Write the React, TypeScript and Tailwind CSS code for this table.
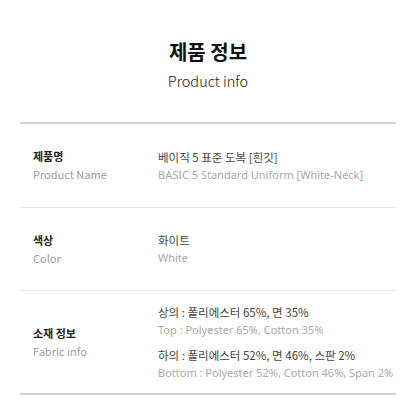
const KO = "font-['Noto_Sans_CJK_KR',sans-serif]";
const EN = "font-['Noto_Sans','Noto_Sans_CJK_KR',sans-serif]";

const ROWS = [
  {
    ko: '제품명',
    en: 'Product Name',
    h: 'h-[83px]',
    values: [{ ko: '베이직 5 표준 도복 [흰깃]', en: 'BASIC 5 Standard Uniform [White-Neck]' }],
  },
  {
    ko: '색상',
    en: 'Color',
    h: 'h-[83px]',
    values: [{ ko: '화이트', en: 'White' }],
  },
  {
    ko: '소재 정보',
    en: 'Fabric info',
    h: 'h-[103px]',
    values: [
      { ko: '상의 : 폴리에스터 65%, 면 35%', en: 'Top : Polyester 65%, Cotton 35%' },
      { ko: '하의 : 폴리에스터 52%, 면 46%, 스판 2%', en: 'Bottom : Polyester 52%, Cotton 46%, Span 2%' },
    ],
  },
];

export default function App() {
  return (
    <main className={`h-[416px] w-[416px] overflow-hidden bg-white ${KO}`}>
      <div className="flex flex-col items-center pt-[39px]">
        <h1 className="text-[20px] font-bold leading-[26px] text-[#111]">제품 정보</h1>
        <p className="mt-[6px] text-[14.5px] font-light leading-[20px] text-[#222]">Product info</p>
      </div>

      <div className="mx-[20px] mt-[31px] border-y-2 border-[#d2d2d2]">
        {ROWS.map((row, i) => (
          <div
            key={row.ko}
            className={`flex items-center pl-[13px] ${i > 0 ? 'border-t border-[#e8e8e8]' : ''} ${row.h}`}
          >
            <div className="w-[125px] shrink-0">
              <div className="text-[11px] font-bold leading-[17px] text-[#222]">{row.ko}</div>
              <div className="text-[11px] leading-[18px] text-[#9a9a9a]">{row.en}</div>
            </div>
            <div className="flex flex-col gap-[7px] whitespace-nowrap">
              {row.values.map((v) => (
                <div key={v.ko}>
                  <div className="text-[11.5px] leading-[18px] text-[#444]">{v.ko}</div>
                  <div className={`${EN} text-[11px] leading-[18px] text-[#a8a8a8]`}>{v.en}</div>
                </div>
              ))}
            </div>
          </div>
        ))}
      </div>
    </main>
  );
}
